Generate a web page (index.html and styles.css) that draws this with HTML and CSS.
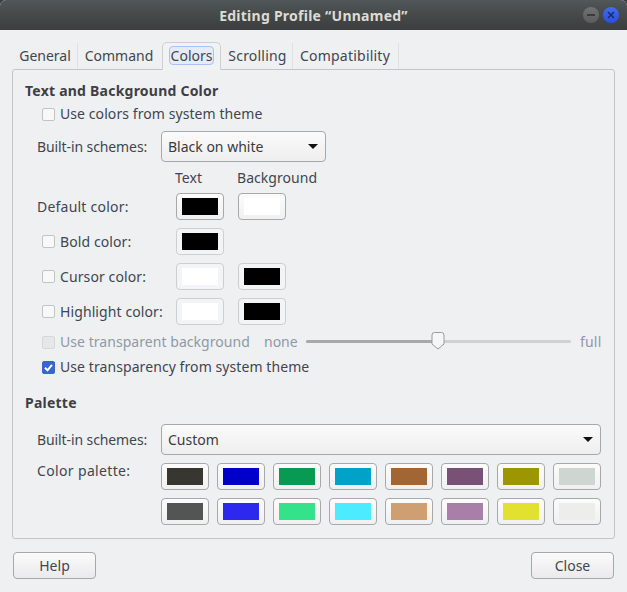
FILE: index.html
```html
<!DOCTYPE html>
<html lang="en">
<head>
<meta charset="utf-8">
<title>Editing Profile</title>
<link rel="stylesheet" href="styles.css">
</head>
<body>
<div class="window">
  <header class="titlebar">
    <span class="title">Editing Profile “Unnamed”</span>
    <div class="controls">
      <span class="wbtn min"><svg width="16" height="16" viewBox="0 0 16 16"><path d="M4 8h8" stroke="#2c2c2c" stroke-width="1.4"/></svg></span>
      <span class="wbtn close"><svg width="16" height="16" viewBox="0 0 16 16"><path d="M5 5l6 6M11 5l-6 6" stroke="#1a2a66" stroke-width="1.5"/></svg></span>
    </div>
  </header>
  <main class="content">
    <nav class="tabs">
      <span class="tab t1">General</span>
      <span class="tab t2">Command</span>
      <span class="tab active"><span class="focus">Colors</span></span>
      <span class="tab t4">Scrolling</span>
      <span class="tab t5">Compatibility</span>
    </nav>
    <section class="panel">
      <h2 class="heading">Text and Background Color</h2>
      <label class="check-line first"><span class="check"></span>Use colors from system theme</label>
      <div class="scheme-row first-combo">
        <span class="field-label">Built-in schemes:</span>
        <div class="combo short"><span>Black on white</span><span class="arrow"></span></div>
      </div>
      <div class="col-heads"><span class="col-head">Text</span><span class="col-head">Background</span></div>
      <div class="color-rows">
        <div class="color-row">
          <span class="row-label plain">Default color:</span>
          <span class="cbtn strong"><i class="sw black"></i></span>
          <span class="cbtn strong"><i class="sw white"></i></span>
        </div>
        <div class="color-row">
          <span class="row-label"><span class="check"></span>Bold color:</span>
          <span class="cbtn"><i class="sw black"></i></span>
        </div>
        <div class="color-row">
          <span class="row-label"><span class="check"></span>Cursor color:</span>
          <span class="cbtn"><i class="sw white"></i></span>
          <span class="cbtn"><i class="sw black"></i></span>
        </div>
        <div class="color-row">
          <span class="row-label"><span class="check"></span>Highlight color:</span>
          <span class="cbtn"><i class="sw white"></i></span>
          <span class="cbtn"><i class="sw black"></i></span>
        </div>
      </div>
      <div class="transparent-row">
        <label class="check-line disabled"><span class="check dis"></span>Use transparent background</label>
        <span class="none">none</span>
        <div class="slider"><span class="fill"></span>
          <svg class="thumb" width="14" height="18" viewBox="0 0 14 18"><path d="M3.5.5h7a2.5 2.5 0 0 1 2.5 2.5v9L7 17 1 12V3A2.5 2.5 0 0 1 3.500.5z" fill="#f6f6f6" stroke="#9a9a9a"/></svg>
        </div>
        <span class="full">full</span>
      </div>
      <label class="check-line sys"><span class="check on"><svg width="13" height="13" viewBox="0 0 13 13"><path d="M3 6.800l2.500 2.500L10 3.800" fill="none" stroke="#fff" stroke-width="2"/></svg></span>Use transparency from system theme</label>
      <h2 class="heading palette-head">Palette</h2>
      <div class="scheme-row second-combo">
        <span class="field-label">Built-in schemes:</span>
        <div class="combo wide"><span>Custom</span><span class="arrow"></span></div>
      </div>
      <div class="palette-row">
        <span class="field-label pal-label">Color palette:</span>
        <div class="palette">
          <span class="cbtn strong"><i class="sw" style="background:#383631"></i></span>
          <span class="cbtn strong"><i class="sw" style="background:#0000cb"></i></span>
          <span class="cbtn strong"><i class="sw" style="background:#069a53"></i></span>
          <span class="cbtn strong"><i class="sw" style="background:#00a2c7"></i></span>
          <span class="cbtn strong"><i class="sw" style="background:#a26534"></i></span>
          <span class="cbtn strong"><i class="sw" style="background:#7a5176"></i></span>
          <span class="cbtn strong"><i class="sw" style="background:#9c9600"></i></span>
          <span class="cbtn strong"><i class="sw" style="background:#cfd6d2"></i></span>
          <span class="cbtn strong"><i class="sw" style="background:#525553"></i></span>
          <span class="cbtn strong"><i class="sw" style="background:#2c28ee"></i></span>
          <span class="cbtn strong"><i class="sw" style="background:#34e289"></i></span>
          <span class="cbtn strong"><i class="sw" style="background:#4debff"></i></span>
          <span class="cbtn strong"><i class="sw" style="background:#cf9f72"></i></span>
          <span class="cbtn strong"><i class="sw" style="background:#a97ea9"></i></span>
          <span class="cbtn strong"><i class="sw" style="background:#e3e12f"></i></span>
          <span class="cbtn strong"><i class="sw" style="background:#edeeec"></i></span>
        </div>
      </div>
    </section>
    <footer class="actions">
      <button class="btn">Help</button>
      <button class="btn">Close</button>
    </footer>
  </main>
</div>
</body>
</html>
```
FILE: styles.css
```css
* { box-sizing: border-box; }
html, body { margin: 0; height: 100%; }
body {
  background: #3a3d3d;
  font-family: "Noto Sans", "Open Sans", sans-serif;
  font-size: 14px;
  color: #3f4650;
  overflow: hidden;
}
.window { width: 627px; height: 592px; background: #eff0f2; border-radius: 6px 6px 0 0; overflow: hidden; }
.titlebar {
  height: 30px;
  background: linear-gradient(#525759, #4a4f50 25%, #3b3e3e);
  display: flex;
  align-items: center;
  justify-content: center;
  position: relative;
}
.title { color: #dfdbd2; font-weight: 700; font-size: 14px; letter-spacing: .25px; }
.controls { position: absolute; right: 8px; top: 7px; display: flex; gap: 4px; }
.wbtn { width: 16px; height: 16px; border-radius: 50%; display: block; }
.wbtn svg { display: block; }
.min { background: linear-gradient(#707273, #5a5c5d); }
.close { background: linear-gradient(#3f6cf0, #2c4fe0); }
.content { padding: 12px 12px 0 12px; height: 562px; }
.tabs { display: flex; height: 27px; padding-left: 1px; }
.tab { height: 26px; display: flex; align-items: center; border-right: 1px solid #dfe0e2; justify-content: center; padding-bottom: 2px; margin-top: 1px; }
.t1 { width: 65px; }
.t2 { width: 84px; border-right: 0; padding-right: 2px; }
.active { width: 59px; height: 28px; margin-top: 0; padding-bottom: 2px; border: 1px solid #cfd0d2; border-bottom: 0; border-radius: 5px 5px 0 0; background: #f1f2f4; position: relative; z-index: 1; }
.focus { border: 1px solid #a9c1f3; border-radius: 4px; background: #e6ebf8; height: 19px; display: flex; align-items: center; padding: 0 1px; width: 45px; justify-content: center; }
.t4 { width: 72px; letter-spacing: .2px; padding-left: 2px; }
.t5 { width: 106px; letter-spacing: .22px; padding-right: 1px; }
.panel { height: 470px; border: 1px solid #c4c5c6; border-radius: 3px; padding: 11px 13px 0 12px; width: 603px; }
.heading { margin: 0; font-size: 14px; font-weight: 700; height: 20px; line-height: 20px; color: #3d3f44; letter-spacing: .23px; }
.check-line { display: flex; align-items: center; height: 20px; white-space: nowrap; letter-spacing: .08px; padding-bottom: 2px; }
.check-line .check { margin-top: 2px; }
.first { margin-top: 3px; padding-left: 17px; }
.check { width: 13px; height: 13px; border: 1px solid #c2c3c5; border-radius: 2px; background: #f8f8f8; margin-right: 5px; flex: none; display: block; }
.check svg { display: block; margin: -1px; }
.on { background: #3866cf; border-color: #3866cf; }
.dis { background: #e6e7e8; border-color: #d6d7d8; }
.scheme-row { display: flex; align-items: center; padding-left: 12px; }
.first-combo { margin-top: 7px; }
.second-combo { margin-top: 11px; }
.field-label { width: 124px; flex: none; letter-spacing: -.1px; }
.combo {
  height: 31px;
  border: 1px solid #a7a8a9;
  border-radius: 4px;
  background: linear-gradient(#fbfbfb, #eeeeef);
  display: flex;
  align-items: center;
  justify-content: space-between;
  padding: 0 6px 0 6px;
  color: #393c40;
  letter-spacing: 0;
}
.short { width: 165px; }
.wide { width: 440px; }
.arrow { width: 0; height: 0; border-left: 5px solid transparent; border-right: 5px solid transparent; border-top: 5px solid #111; margin-right: 1px; }
.col-heads { display: flex; margin-top: 6px; height: 20px; line-height: 20px; padding-left: 150px; }
.col-head { width: 62px; flex: none; white-space: nowrap; letter-spacing: .05px; }
.color-rows { display: flex; flex-direction: column; gap: 8px; margin-top: 5px; }
.color-row { display: flex; height: 27px; gap: 14px; padding-left: 12px; align-items: center; }
.row-label { width: 125px; padding-left: 5px; display: flex; align-items: center; flex: none; letter-spacing: .1px; white-space: nowrap; }
.plain { padding-left: 0; margin-bottom: 1px; letter-spacing: .22px; }
.cbtn {
  width: 48px; height: 27px; border: 1px solid #cdced0; border-radius: 4px;
  background: #f3f4f5; display: flex; align-items: center; justify-content: center; flex: none;
}
.strong { border-color: #a7a8a9; background: linear-gradient(#fcfcfc, #f0f0f1); }
.sw { width: 36px; height: 17px; display: block; }
.black { background: #000; }
.white { background: #fff; }
.transparent-row { display: flex; align-items: center; margin-top: 7px; height: 20px; }
.disabled { color: #8e99a8; padding-left: 17px; width: 239px; flex: none; letter-spacing: .05px; }
.none { color: #8e99a8; width: 42px; flex: none; padding-bottom: 2px; }
.slider { width: 265px; height: 3px; border-radius: 2px; background: #d0d1d2; position: relative; flex: none; margin-top: -1px; }
.fill { display: block; width: 132px; height: 3px; border-radius: 2px; background: #a8a9aa; }
.thumb { position: absolute; left: 125px; top: -8px; display: block; }
.full { color: #8e99a8; margin-left: 9px; padding-bottom: 2px; letter-spacing: .2px; }
.sys { margin-top: 5px; padding-left: 17px; }
.palette-head { margin-top: 16px; }
.palette-row { display: flex; padding-left: 12px; margin-top: 8px; }
.pal-label { line-height: 16px; letter-spacing: .35px; }
.palette { display: grid; grid-template-columns: repeat(8, 48px); column-gap: 8px; row-gap: 8px; }
.actions { display: flex; justify-content: space-between; padding: 0 1px; margin-top: 13px; width: 603px; }
.btn {
  width: 83px; height: 27px; border: 1px solid #a7a8a9; border-radius: 4px;
  background: linear-gradient(#fbfbfb, #eaeaec);
  font: 14px "Noto Sans", "Open Sans", sans-serif; color: #3f4650; padding: 0;
}
```
